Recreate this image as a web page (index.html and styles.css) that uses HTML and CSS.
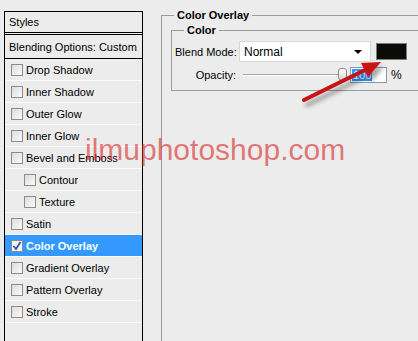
FILE: index.html
```html
<!DOCTYPE html>
<html lang="en">
<head>
    <meta charset="UTF-8">
    <meta name="viewport" content="width=device-width, initial-scale=1.0">
    <title>Layer Style - Color Overlay</title>
    <link rel="stylesheet" href="styles.css">
</head>
<body>
    <div class="styles-panel">
        <div class="panel-title">Styles</div>
        <div class="blending">Blending Options: Custom</div>
        <div class="style-row"><span class="check"></span>Drop Shadow</div>
        <div class="style-row"><span class="check"></span>Inner Shadow</div>
        <div class="style-row"><span class="check"></span>Outer Glow</div>
        <div class="style-row"><span class="check"></span>Inner Glow</div>
        <div class="style-row"><span class="check"></span>Bevel and Emboss</div>
        <div class="style-row sub"><span class="check"></span>Contour</div>
        <div class="style-row sub"><span class="check"></span>Texture</div>
        <div class="style-row"><span class="check"></span>Satin</div>
        <div class="style-row selected">
            <span class="check">
                <svg width="10" height="10" viewBox="0 0 10 10"><path d="M1.5 5 L4 8 L8.5 1" fill="none" stroke="#3b4fa8" stroke-width="1.8"/></svg>
            </span>Color Overlay
        </div>
        <div class="style-row"><span class="check"></span>Gradient Overlay</div>
        <div class="style-row"><span class="check"></span>Pattern Overlay</div>
        <div class="style-row"><span class="check"></span>Stroke</div>
    </div>

    <fieldset class="group">
        <legend>Color Overlay</legend>
        <fieldset class="group inner">
            <legend>Color</legend>
            <div class="field-row">
                <label class="field-label">Blend Mode:</label>
                <div class="select">
                    <span>Normal</span>
                    <span class="select-arrow"></span>
                </div>
                <div class="swatch"></div>
            </div>
            <div class="field-row">
                <label class="field-label">Opacity:</label>
                <div class="slider">
                    <div class="track"></div>
                    <div class="thumb"></div>
                </div>
                <div class="num-input"><span class="sel">100</span></div>
                <span class="unit">%</span>
            </div>
        </fieldset>
    </fieldset>

    <!-- watermark and annotation arrow sit over the dialog -->
    <div class="watermark">ilmuphotoshop.com</div>
    <svg class="arrow" width="95" height="55" viewBox="0 0 95 55">
        <line x1="9" y1="45" x2="72" y2="14" stroke="#c81414" stroke-width="4" stroke-linecap="round"/>
        <polygon points="86,7 73,22 66,8" fill="#c81414"/>
    </svg>
</body>
</html>
```

FILE: styles.css
```css
body {
    margin: 0;
    height: 341px;
    overflow: hidden;
    display: flex;
    align-items: flex-start;
    background-color: #ececec;
    font-family: "Liberation Sans", Arial, sans-serif;
    font-size: 11px;
    color: #000;
    position: relative;
}
.styles-panel {
    flex: none;
    width: 137px;
    height: 340px;
    margin: 11px 0 0 4px;
    border: 1px solid #000;
    border-bottom: none;
}
.panel-title {
    height: 20px;
    line-height: 20px;
    padding-left: 4px;
    border-bottom: 3px double #000;
}
.blending {
    height: 23px;
    line-height: 25px;
    padding-left: 4px;
    border-bottom: 1px solid #000;
}
.style-row {
    display: flex;
    align-items: center;
    height: 21px;
    padding-left: 6px;
    border-bottom: 1px solid #fafafa;
}
.style-row.sub {
    padding-left: 19px;
}
.style-row.selected {
    background-color: #3399ff;
    color: #fff;
    font-weight: bold;
}
.check {
    flex: none;
    display: flex;
    align-items: center;
    justify-content: center;
    width: 10px;
    height: 10px;
    margin-right: 3px;
    border: 1px solid #8c8c8c;
    background: linear-gradient(135deg, #dcdcdc, #fafafa);
}
.selected .check {
    background: #f4f4f4;
}
/* Group boxes */
.group {
    flex: none;
    width: 300px;
    margin: 9px 0 0 18px;
    padding: 3px 0 0 9px;
    border: 1px solid #9c9c9c;
    border-right: none;
    min-height: 330px;
}
.group legend {
    margin-left: 3px;
    padding: 0 3px;
    font-weight: bold;
}
.group.inner {
    width: 280px;
    min-height: 0;
    margin: 0;
    padding: 4px 0 4px 3px;
}
.group.inner legend {
    margin-left: 9px;
}
.field-row {
    display: flex;
    align-items: center;
    height: 23px;
}
.field-label {
    width: 61px;
    margin-right: 3px;
    text-align: right;
    white-space: nowrap;
}
.select {
    display: flex;
    align-items: center;
    justify-content: space-between;
    width: 118px;
    height: 19px;
    padding: 0 8px 0 4px;
    border: 1px solid #d8d8d8;
    background-color: #fff;
    font-size: 12px;
}
.select-arrow {
    width: 0;
    height: 0;
    border-left: 4px solid transparent;
    border-right: 4px solid transparent;
    border-top: 4px solid #000;
}
.swatch {
    width: 29px;
    height: 15px;
    margin-left: 5px;
    border: 1px solid #7a7a7a;
    background-color: #0b0b08;
}
.slider {
    display: flex;
    align-items: center;
    width: 106px;
    height: 14px;
    margin-left: 4px;
}
.track {
    width: 95px;
    height: 1px;
    background-color: #a4a4a4;
    border-bottom: 1px solid #fff;
}
.thumb {
    width: 7px;
    height: 11px;
    border: 1px solid #8a8a8a;
    border-radius: 3px 3px 4px 4px;
    background: linear-gradient(#fff, #d6d6d6);
}
.num-input {
    display: flex;
    align-items: center;
    width: 34px;
    height: 14px;
    margin-left: 1px;
    padding-left: 1px;
    border: 1px solid #7f9db9;
    background-color: #fff;
}
.sel {
    background-color: #3399ff;
    color: #fff;
    padding: 0 1px;
}
.unit {
    margin-left: 4px;
    font-size: 12px;
}
/* Overlays */
.watermark {
    position: absolute;
    left: 85px;
    top: 133px;
    font-size: 30px;
    color: rgba(216, 40, 40, 0.62);
}
.arrow {
    position: absolute;
    left: 295px;
    top: 55px;
    filter: drop-shadow(3px 5px 2px rgba(0, 0, 0, 0.35));
}
```
